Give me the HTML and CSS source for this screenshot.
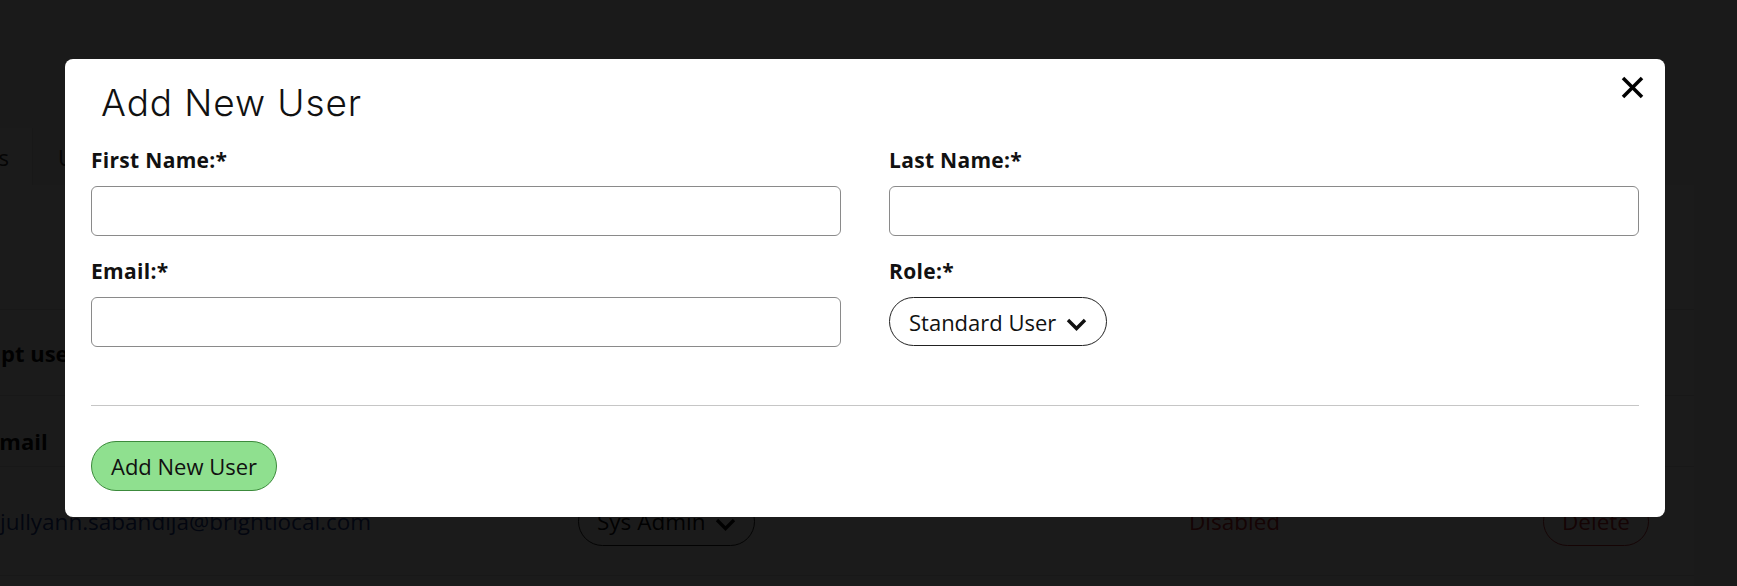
FILE: index.html
```html
<!DOCTYPE html>
<html lang="en">
<head>
<meta charset="utf-8">
<title>Add New User</title>
<link rel="stylesheet" href="styles.css">
</head>
<body>
<div class="page">
  <nav class="tabs">
    <span class="tab tab-active">Locations</span>
    <span class="tab">Users</span>
  </nav>
  <section class="card">
    <div class="card-top"></div>
    <div class="section-row">Prompt users</div>
    <div class="grid-row head-row">
      <span>Email</span>
      <span>Role</span>
      <span>Status</span>
      <span></span>
    </div>
    <div class="grid-row data-row">
      <span class="email-cell">jullyann.sabandija@brightlocal.com</span>
      <span><span class="bg-pill">Sys Admin
        <svg class="chev" viewBox="0 0 21 13" width="21" height="13"><polyline points="2,2 10.5,10.5 19,2"/></svg></span></span>
      <span class="status">Disabled</span>
      <span><span class="bg-pill delete">Delete</span></span>
    </div>
  </section>
</div>

<div class="overlay">
  <div class="modal">
    <button class="close" type="button" aria-label="Close">
      <svg viewBox="0 0 23 23" width="23" height="23"><line x1="2" y1="2" x2="21" y2="21"/><line x1="21" y1="2" x2="2" y2="21"/></svg>
    </button>
    <h2 class="modal-title">Add New User</h2>
    <form class="form-grid">
      <div class="field">
        <label class="label">First Name:*</label>
        <input class="text-input" type="text">
      </div>
      <div class="field">
        <label class="label">Last Name:*</label>
        <input class="text-input" type="text">
      </div>
      <div class="field">
        <label class="label">Email:*</label>
        <input class="text-input" type="email">
      </div>
      <div class="field">
        <label class="label">Role:*</label>
        <div class="select-row">
          <span class="role-select">Standard User
            <svg class="chev" viewBox="0 0 21 13" width="21" height="13"><polyline points="2,2 10.5,10.5 19,2"/></svg>
          </span>
        </div>
      </div>
    </form>
    <hr class="divider">
    <button class="submit" type="button">Add New User</button>
  </div>
</div>
</body>
</html>
```

FILE: styles.css
```css
* { box-sizing: border-box; }
html, body { margin: 0; height: 100%; }
body {
  background: #f0f0f0;
  font-family: "Open Sans", "Noto Sans", sans-serif;
  color: #111;
  overflow: hidden;
}

/* underlying page */
.page { margin-left: -60px; width: 1754px; }
.tabs { display: flex; margin-top: 128px; height: 57px; }
.tab { display: flex; align-items: center; font-size: 22px; color: #333; }
.tab-active {
  width: 93px;
  justify-content: flex-end;
  padding-right: 23px;
  background: #fff;
  border-right: 1px solid #ddd;
}
.tab + .tab { padding-left: 25px; }
.card { background: #fff; height: 420px; }
.card-top { height: 125px; border-bottom: 1px solid #ddd; }
.section-row {
  height: 86px;
  display: flex;
  align-items: center;
  padding-left: 2px;
  font-weight: 700;
  font-size: 22px;
  border-bottom: 1px solid #ddd;
}
.grid-row {
  display: grid;
  grid-template-columns: 591px 611px 354px 120px;
  padding-left: 47px;
  align-items: center;
  border-bottom: 1px solid #ddd;
  font-size: 22px;
}
.head-row { height: 71px; padding-top: 20px; font-weight: 700; }
.data-row { height: 109px; font-size: 22.5px; }
.email-cell { padding-left: 13px; color: #1c3f94; }
.status { color: #c0262d; }
.bg-pill {
  display: inline-flex;
  align-items: center;
  gap: 10px;
  height: 49px;
  padding: 0 18px;
  border: 1px solid #222;
  border-radius: 25px;
}
.bg-pill.delete { color: #c0262d; border-color: #c0262d; padding: 0 18px; }

/* overlay + modal */
.overlay {
  position: fixed;
  inset: 0;
  background: rgba(0, 0, 0, 0.894);
}
.modal {
  position: relative;
  width: 1600px;
  margin: 59px 0 0 65px;
  background: #fff;
  border-radius: 8px;
  padding: 22px 26px 26px;
}
.close {
  position: absolute;
  top: 17px;
  right: 21px;
  width: 23px;
  height: 23px;
  padding: 0;
  border: 0;
  background: none;
  display: block;
}
.close svg { display: block; }
.close line { stroke: #000; stroke-width: 3.6; }

.modal-title {
  margin: 0;
  padding-left: 10px;
  font-family: "Inter", sans-serif;
  font-weight: 300;
  font-size: 37px;
  letter-spacing: 0.9px;
  line-height: 44px;
  color: #111;
}
.form-grid {
  margin-top: 22px;
  display: grid;
  grid-template-columns: 1fr 1fr;
  column-gap: 48px;
  row-gap: 22px;
}
.field { display: flex; flex-direction: column; align-items: stretch; }
.label {
  font-weight: 700;
  font-size: 21px;
  letter-spacing: 0.3px;
  line-height: 27px;
  margin-bottom: 12px;
  color: #111;
}
.text-input {
  height: 50px;
  border: 1px solid #8a8a8a;
  border-radius: 6px;
  font: inherit;
  font-size: 20px;
  padding: 0 14px;
  background: #fff;
}
.select-row { display: flex; }
.role-select {
  display: inline-flex;
  align-items: center;
  gap: 10px;
  height: 49px;
  padding: 0 19px;
  border: 1px solid #222;
  border-radius: 25px;
  font-size: 22px;
  color: #111;
}
.chev { display: block; margin-top: 6px; }
.chev polyline { fill: none; stroke: #111; stroke-width: 3.4; }

.divider {
  margin: 58px 0 35px;
  border: 0;
  border-top: 1px solid #c6c6c6;
  height: 0;
}
.submit {
  display: inline-flex;
  align-items: center;
  height: 50px;
  padding: 0 19px;
  border: 1px solid #3c8a3c;
  border-radius: 25px;
  background: #8fe08f;
  font-family: "Open Sans", sans-serif;
  font-size: 22px;
  color: #111;
}
```
